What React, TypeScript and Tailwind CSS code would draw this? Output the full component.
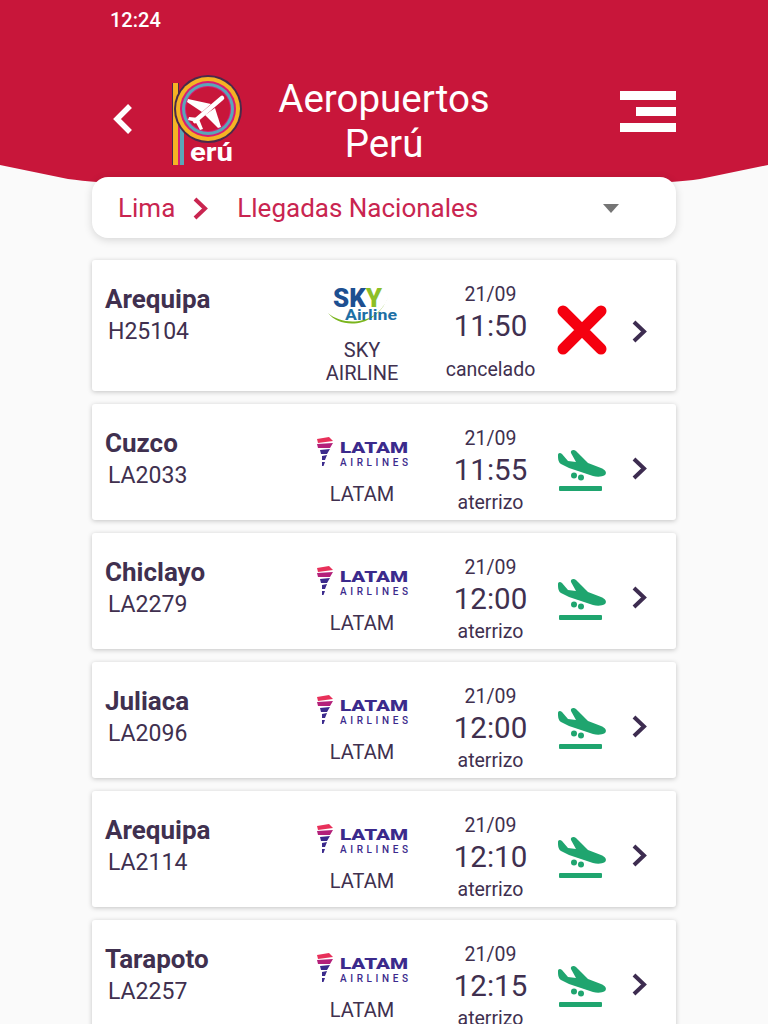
type Flight = {
  city: string;
  code: string;
  airline: "sky" | "latam";
  time: string;
  status: string;
};

const flights: Flight[] = [
  { city: "Arequipa", code: "H25104", airline: "sky", time: "11:50", status: "cancelado" },
  { city: "Cuzco", code: "LA2033", airline: "latam", time: "11:55", status: "aterrizo" },
  { city: "Chiclayo", code: "LA2279", airline: "latam", time: "12:00", status: "aterrizo" },
  { city: "Juliaca", code: "LA2096", airline: "latam", time: "12:00", status: "aterrizo" },
  { city: "Arequipa", code: "LA2114", airline: "latam", time: "12:10", status: "aterrizo" },
  { city: "Tarapoto", code: "LA2257", airline: "latam", time: "12:15", status: "aterrizo" },
];

const Chevron = ({ color }: { color: string }) => (
  <svg viewBox="0 0 15 23" className="h-[23px] w-[15px]">
    <path d="M2 2L12 11.500L2 21" fill="none" stroke={color} strokeWidth="4" />
  </svg>
);

const PeruLogo = () => (
  <svg viewBox="0 0 70 93" className="h-[93px] w-[70px] overflow-visible">
    <rect x="0" y="8" width="7" height="85" fill="#4a2a4a" />
    <rect x="1" y="8" width="5" height="85" fill="#f5b324" />
    <rect x="6" y="32" width="2" height="58" fill="#d81b74" />
    <rect x="8" y="32" width="4" height="58" fill="#5aa6b8" />
    <circle cx="36" cy="34" r="34" fill="#4a2a4a" />
    <circle cx="36" cy="34" r="32" fill="#f5b324" />
    <circle cx="36" cy="34" r="28" fill="#d81b74" />
    <circle cx="36" cy="34" r="26" fill="#5aa6b8" />
    <circle cx="36" cy="34" r="23" fill="#d81b74" />
    <circle cx="36" cy="34" r="22" fill="#c8163a" />
    <path d="M50 23L23 46" stroke="#fff" strokeWidth="4.500" strokeLinecap="round" />
    <path d="M39 29L16 24L15 27L30 37Z" fill="#fff" />
    <path d="M43 33L49 52L46 53L33 40Z" fill="#fff" />
    <path d="M27 43L17 42L16 45L24 47Z" fill="#fff" />
    <path d="M27 44L31 54L28 55L23 46Z" fill="#fff" />
    <text x="18" y="86" fill="#fff" fontFamily="Roboto, sans-serif" fontWeight="700" fontSize="26" textLength="43" lengthAdjust="spacingAndGlyphs">
      erú
    </text>
  </svg>
);

const SkyLogo = () => (
  <svg viewBox="0 0 72 44" className="h-[44px] w-[72px]">
    <path d="M2 28C14 44 50 44 62 12C52 40 18 42 2 28Z" fill="#7ab51d" />
    <text x="7" y="22" fill="#1d4f91" fontFamily="Roboto, sans-serif" fontWeight="900" fontSize="25" textLength="49" lengthAdjust="spacingAndGlyphs">
      SK<tspan fill="#8cbf26">Y</tspan>
    </text>
    <text x="19" y="35" fill="#1d6fa5" fontFamily="Roboto, sans-serif" fontWeight="700" fontSize="15" textLength="52" lengthAdjust="spacingAndGlyphs">
      Airline
    </text>
  </svg>
);

const LatamLogo = () => (
  <svg viewBox="0 0 96 32" className="h-[32px] w-[96px]">
    <path d="M3 4L15 2L19 6L4 8Z" fill="#e8305a" />
    <path d="M3 9L19 8L16 13L4 13Z" fill="#b3207a" />
    <path d="M6 15L16 14L13 19L7 19Z" fill="#3b2a8c" />
    <path d="M8 21L13 20L11 25L8 25Z" fill="#3b2a8c" />
    <path d="M8 27L11 27L9.500 31L8 31Z" fill="#3b2a8c" />
    <text x="26" y="17.500" fill="#3b2a8c" fontFamily="Roboto, sans-serif" fontWeight="900" fontSize="15" textLength="68" lengthAdjust="spacingAndGlyphs">
      LATAM
    </text>
    <text x="26" y="31" fill="#3b2a8c" fontFamily="Roboto, sans-serif" fontWeight="500" fontSize="10" textLength="68">
      AIRLINES
    </text>
  </svg>
);

const LandedIcon = () => (
  <svg viewBox="0 0 55 45" className="h-[45px] w-[55px]">
    <path
      fill="#1fa56f"
      d="M3 6C3 4 5 3 7 5L13 12L21 13L16 4C15 1 19 0 21 2L33 14L46 19C51 21 52 24 50 26C47 28 42 28 38 27L14 19L6 15C3 13 3 9 3 6Z"
    />
    <circle cx="19" cy="26.500" r="3" fill="#1fa56f" />
    <circle cx="26" cy="28.500" r="3" fill="#1fa56f" />
    <rect x="4" y="37" width="43" height="5" rx="1" fill="#1fa56f" />
  </svg>
);

const CancelledIcon = () => (
  <svg viewBox="0 0 55 50" className="h-[50px] w-[55px]">
    <path d="M8 6L46 44M46 6L8 44" stroke="#f5000f" strokeWidth="11" strokeLinecap="round" />
  </svg>
);

const FlightRow = ({ flight }: { flight: Flight }) => {
  const cancelled = flight.status === "cancelado";
  return (
    <div className="flex min-h-[116px] rounded-[3px] bg-white text-[#40304f] shadow-[0_1px_5px_rgba(0,0,0,0.22)]">
      <div className="w-[205px] pl-[13px] pt-[24px]">
        <div className="text-[26px] leading-[30px] font-bold">{flight.city}</div>
        <div className="pl-[3px] text-[23px] leading-[36px]">{flight.code}</div>
      </div>
      <div className="flex w-[130px] flex-col items-center pt-[25px] pb-[6px]">
        <div className="flex h-[44px] items-center">
          {flight.airline === "sky" ? <SkyLogo /> : <LatamLogo />}
        </div>
        <div className="mt-[10px] text-center text-[20px] leading-[23px]">
          {flight.airline === "sky" ? (
            <>
              SKY
              <br />
              AIRLINE
            </>
          ) : (
            "LATAM"
          )}
        </div>
      </div>
      <div className="flex w-[127px] flex-col items-center pt-[22px]">
        <div className="text-[19.5px] leading-[26px]">21/09</div>
        <div className="text-[29.5px] leading-[36px]">{flight.time}</div>
        <div className={`text-[19.5px] leading-[30px] ${cancelled ? "mt-[11px]" : ""}`}>{flight.status}</div>
      </div>
      <div className="w-[55px] pl-[1px] pt-[45px]">
        {cancelled ? <CancelledIcon /> : <LandedIcon />}
      </div>
      <div className="flex flex-1 items-center pl-[23px] pt-[12px]">
        <Chevron color="#3d2c50" />
      </div>
    </div>
  );
};

export default function App() {
  return (
    <div className="h-[1024px] w-[768px] overflow-hidden bg-[#fafafa] font-['Roboto',sans-serif]">
      <header>
        <div className="h-[165px] bg-[#c8163a] pt-[9px] text-white">
          <div className="pl-[110px] text-[20px] leading-[22px] font-medium">12:24</div>
          <div className="mt-[44px] flex items-center pl-[113px]">
            <svg viewBox="0 0 20 32" className="mb-[5px] h-[32px] w-[20px]">
              <path d="M17 3L4 16L17 29" fill="none" stroke="#fff" strokeWidth="5.500" />
            </svg>
            <div className="ml-[39px]">
              <PeruLogo />
            </div>
            <div className="mb-[2px] ml-[36px] w-[212px] text-center text-[38.5px] leading-[45px]">
              Aeropuertos
              <br />
              Perú
            </div>
            <div className="mb-[20px] ml-[130px] flex w-[56px] flex-col items-end gap-[7px]">
              <div className="h-[9px] w-[56px] bg-white" />
              <div className="h-[9px] w-[40px] bg-white" />
              <div className="h-[9px] w-[56px] bg-white" />
            </div>
          </div>
        </div>
        <svg viewBox="0 0 768 30" preserveAspectRatio="none" className="block h-[30px] w-[768px]">
          <path d="M0 0H768L700 14C600 28 168 28 68 14Z" fill="#c8163a" />
        </svg>
      </header>

      <main className="relative -mt-[18px] ml-[92px] flex w-[584px] flex-col">
        <div className="flex h-[61px] items-center rounded-[16px] bg-white pl-[26px] pt-[1px] text-[26px] text-[#c92550] shadow-[0_2px_8px_rgba(0,0,0,0.15)]">
          <span>Lima</span>
          <div className="ml-[18px]">
            <Chevron color="#c92550" />
          </div>
          <span className="ml-[29px]">Llegadas Nacionales</span>
          <div className="ml-[125px] h-0 w-0 border-x-[8px] border-t-[9px] border-x-transparent border-t-[#757575]" />
        </div>
        <div className="mt-[22px] flex flex-col gap-[13px]">
          {flights.map((f, i) => (
            <FlightRow key={i} flight={f} />
          ))}
        </div>
      </main>
    </div>
  );
}
